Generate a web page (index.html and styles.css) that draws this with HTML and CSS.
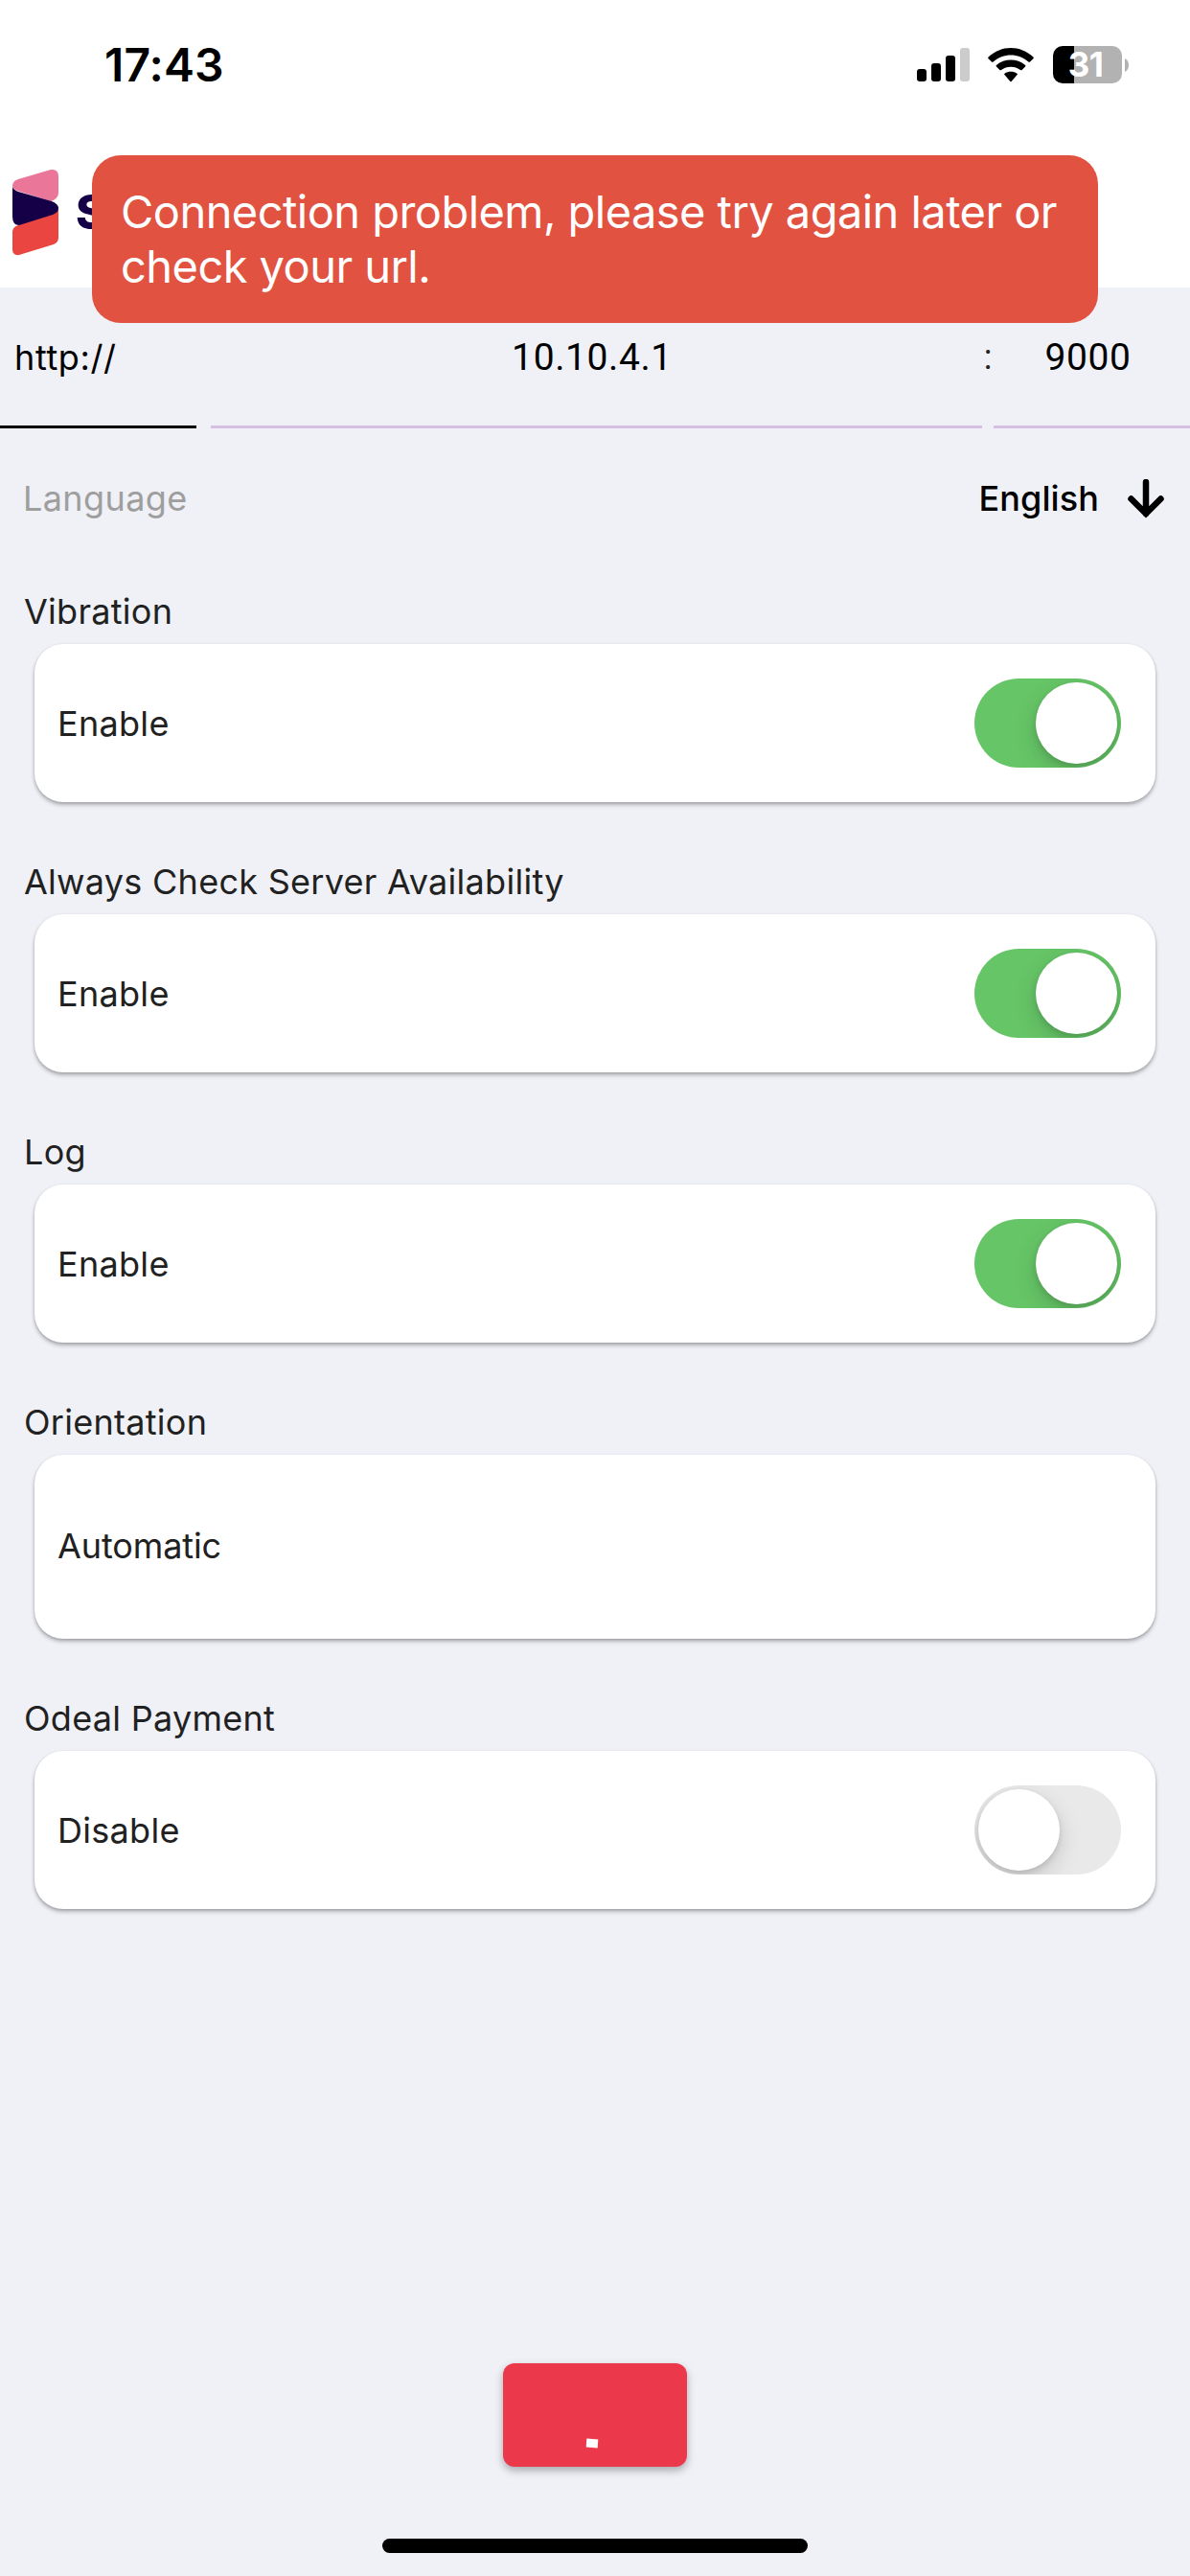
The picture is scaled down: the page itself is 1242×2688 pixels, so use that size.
FILE: index.html
```html
<!DOCTYPE html>
<html lang="en">
<head>
  <meta charset="UTF-8" />
  <meta name="viewport" content="width=device-width, initial-scale=1" />
  <title>Settings</title>
  <link rel="stylesheet" href="styles.css">
</head>
<body>
  <div class="screen">
    <header class="header">
      <div class="status-bar">
        <span class="time">17:43</span>
        <div class="status-icons">
          <svg class="signal" width="55" height="36" viewBox="0 0 55 36">
            <rect x="0" y="22" width="10" height="13" rx="3" />
            <rect x="15" y="16" width="10" height="19" rx="3" />
            <rect x="30" y="8" width="10" height="27" rx="3" />
            <rect x="45" y="0" width="10" height="35" rx="3" fill="#ccc" />
          </svg>
          <svg class="wifi" width="48" height="36" viewBox="0 0 48 36">
            <path d="M.6 11.2Q-.2 10.4.6 9.6C14-3.2 34-3.2 47.4 9.6Q48.2 10.4 47.4 11.2L44 14.6Q43.2 15.4 42.4 14.6C32 5.1 16 5.1 5.6 14.6Q4.8 15.4 4 14.6Z" />
            <path d="M8.9 19.5Q8.1 18.7 8.9 17.9C17.5 10.6 30.5 10.6 39.1 17.9Q39.9 18.7 39.1 19.5L35.6 23Q34.8 23.7 34 23C28.5 18.5 19.5 18.5 14 23Q13.2 23.7 12.4 23Z" />
            <path d="M17.4 28.1Q16.6 27.3 17.5 26.7C21.5 24.2 26.5 24.2 30.5 26.7Q31.4 27.3 30.6 28.1L24.6 34.9Q24 35.5 23.4 34.9Z" />
          </svg>
          <div class="battery">
            <span class="battery-level">31</span>
          </div>
          <svg class="battery-cap" width="4" height="14" viewBox="0 0 4 14">
            <path d="M0 0Q4 2 4 7T0 14Z" />
          </svg>
        </div>
      </div>
      <div class="brand">
        <svg class="logo" width="50" height="92" viewBox="0 0 50 92">
          <path fill="#ea7699" d="M1 18Q1 13 7 11L41 1Q49 0 49 8V26Q48 32 41 34L6 23Q1 21 1 18Z" />
          <path fill="#ea4540" d="M49 42V72Q49 77 44 79L8 90Q1 91 1 84V66Q1 61 7 59Z" />
          <path fill="#150048" d="M1 19Q2 22 7 24L42 34Q49 37 49 41Q49 46 43 48L8 59Q1 59 1 50Z" />
        </svg>
        <span class="brand-name">S</span>
      </div>
    </header>

    <div class="toast">Connection problem, please try again later or check your url.</div>

    <main>
      <div class="url-row">
        <div class="field protocol">http://</div>
        <div class="field host">10.10.4.1</div>
        <span class="colon">:</span>
        <div class="field port">9000</div>
      </div>

      <div class="language-row">
        <span class="language-label">Language</span>
        <div class="language-value">
          <span>English</span>
          <svg width="38" height="41" viewBox="0 0 38 41">
            <path d="M19 3V36M3.5 20.5L19 36L34.5 20.5" fill="none" stroke="#000" stroke-width="6.5" stroke-linecap="round" />
          </svg>
        </div>
      </div>

      <section class="setting">
        <h2>Vibration</h2>
        <div class="card">
          <span>Enable</span>
          <div class="toggle on"><div class="thumb"></div></div>
        </div>
      </section>

      <section class="setting">
        <h2>Always Check Server Availability</h2>
        <div class="card">
          <span>Enable</span>
          <div class="toggle on"><div class="thumb"></div></div>
        </div>
      </section>

      <section class="setting">
        <h2>Log</h2>
        <div class="card">
          <span>Enable</span>
          <div class="toggle on"><div class="thumb"></div></div>
        </div>
      </section>

      <section class="setting">
        <h2>Orientation</h2>
        <div class="card tall">
          <span>Automatic</span>
        </div>
      </section>

      <section class="setting">
        <h2>Odeal Payment</h2>
        <div class="card">
          <span>Disable</span>
          <div class="toggle"><div class="thumb"></div></div>
        </div>
      </section>
    </main>

    <footer class="footer">
      <div class="save-btn"><div class="spinner"></div></div>
      <div class="home-bar"></div>
    </footer>
  </div>
</body>
</html>
```
FILE: styles.css
```css
* {
  margin: 0;
  padding: 0;
  box-sizing: border-box;
}

body {
  background: #f0f1f7;
  color: #212121;
  font-family: 'Inter', sans-serif;
  font-size: 36px;
}

svg {
  display: block;
}

.screen {
  position: relative;
  width: 1242px;
  height: 2688px;
  display: flex;
  flex-direction: column;
  overflow: hidden;
}

.header {
  height: 300px;
  background: #fff;
}

/* status bar */
.status-bar {
  height: 135px;
  padding: 0 64px 0 109px;
  display: flex;
  align-items: center;
  justify-content: space-between;
  color: #000;
}

.time {
  font-size: 48px;
  font-weight: 600;
  letter-spacing: 0.1px;
}

.status-icons {
  display: flex;
  align-items: center;
}

.wifi {
  margin-left: 19px;
}

.battery {
  width: 72px;
  height: 39px;
  margin-left: 20px;
  padding-right: 4px;
  border-radius: 10px;
  background: linear-gradient(to right, #000 22px, #b2b2b2 22px);
  display: flex;
  align-items: center;
  justify-content: center;
}

.battery-level {
  color: #fff;
  font-size: 35px;
  font-weight: 700;
  line-height: 39px;
  letter-spacing: -0.6px;
}

.battery-cap {
  margin-left: 3px;
  fill: #b2b2b2;
}

.brand {
  display: flex;
  align-items: center;
  padding: 41px 0 0 12px;
}

.brand-name {
  margin-left: 17px;
  color: #150048;
  font-size: 49px;
  font-weight: 800;
  line-height: 60px;
}

.toast {
  position: absolute;
  top: 162px;
  left: 96px;
  width: 1050px;
  height: 175px;
  padding: 30px 30px;
  border-radius: 30px;
  background: #e15241;
  color: #fff;
  font-size: 47px;
  line-height: 57px;
  letter-spacing: -0.55px;
}

/* server address */
.url-row {
  height: 147px;
  display: flex;
  color: #000;
}

.field {
  border-bottom: 3px solid #d6bfe3;
  padding-top: 48px;
  line-height: 50px;
}

.protocol {
  width: 205px;
  padding-left: 15px;
  border-color: #000;
  letter-spacing: 0.6px;
}

.host {
  width: 805px;
  margin-left: 15px;
  padding-right: 9px;
  text-align: center;
}

.port {
  flex: 1;
  padding-right: 8px;
  text-align: center;
}

.host,
.port {
  font-family: 'Roboto', sans-serif;
  font-size: 39px;
  letter-spacing: 0.6px;
}

.colon {
  width: 12px;
  padding-top: 48px;
  line-height: 50px;
  text-align: center;
  color: #222;
  font-family: 'Roboto', sans-serif;
  font-size: 36px;
}

.language-row {
  height: 146px;
  margin-bottom: 1px;
  padding: 0 27px 0 24px;
  display: flex;
  align-items: center;
  justify-content: space-between;
}

.language-label {
  color: #9e9e9e;
  letter-spacing: 0.4px;
}

.language-value {
  display: flex;
  align-items: center;
  gap: 30px;
  color: #000;
  font-weight: 500;
  letter-spacing: 0.1px;
}

/* settings */
.setting {
  margin-bottom: 39px;
}

.setting h2 {
  height: 78px;
  padding: 21px 0 0 25px;
  font-size: 36px;
  font-weight: 400;
  line-height: 46px;
  letter-spacing: 0.28px;
}

.card {
  height: 165px;
  margin: 0 36px;
  padding: 0 36px 0 24px;
  border-radius: 30px;
  background: #fff;
  box-shadow: 0 3px 4px rgba(0, 0, 0, 0.25), 0 1px 3px rgba(0, 0, 0, 0.14);
  display: flex;
  align-items: center;
  justify-content: space-between;
  letter-spacing: 0.3px;
}

.card.tall {
  height: 192px;
  padding-bottom: 2px;
  letter-spacing: -0.1px;
}

.toggle {
  width: 153px;
  height: 93px;
  padding: 4px;
  border-radius: 47px;
  background: #e9e9e9;
  display: flex;
  align-items: center;
  overflow: hidden;
}

.toggle.on {
  justify-content: flex-end;
  background: #66c567;
}

.thumb {
  width: 85px;
  height: 85px;
  border-radius: 50%;
  background: #fff;
  box-shadow: 0 9px 24px rgba(0, 0, 0, 0.15), 0 3px 6px rgba(0, 0, 0, 0.12);
}

.footer {
  margin-top: auto;
  padding-bottom: 24px;
  display: flex;
  flex-direction: column;
  align-items: center;
  gap: 75px;
}

.save-btn {
  width: 192px;
  height: 108px;
  padding: 0 7px 20px 0;
  border-radius: 12px;
  background: #eb394b;
  box-shadow: 0 4px 9px rgba(0, 0, 0, 0.3);
  display: flex;
  align-items: flex-end;
  justify-content: center;
}

.spinner {
  width: 12px;
  height: 9px;
  background: #fff;
  transform: rotate(4deg);
}

.home-bar {
  width: 444px;
  height: 15px;
  border-radius: 8px;
  background: #000;
}
```
